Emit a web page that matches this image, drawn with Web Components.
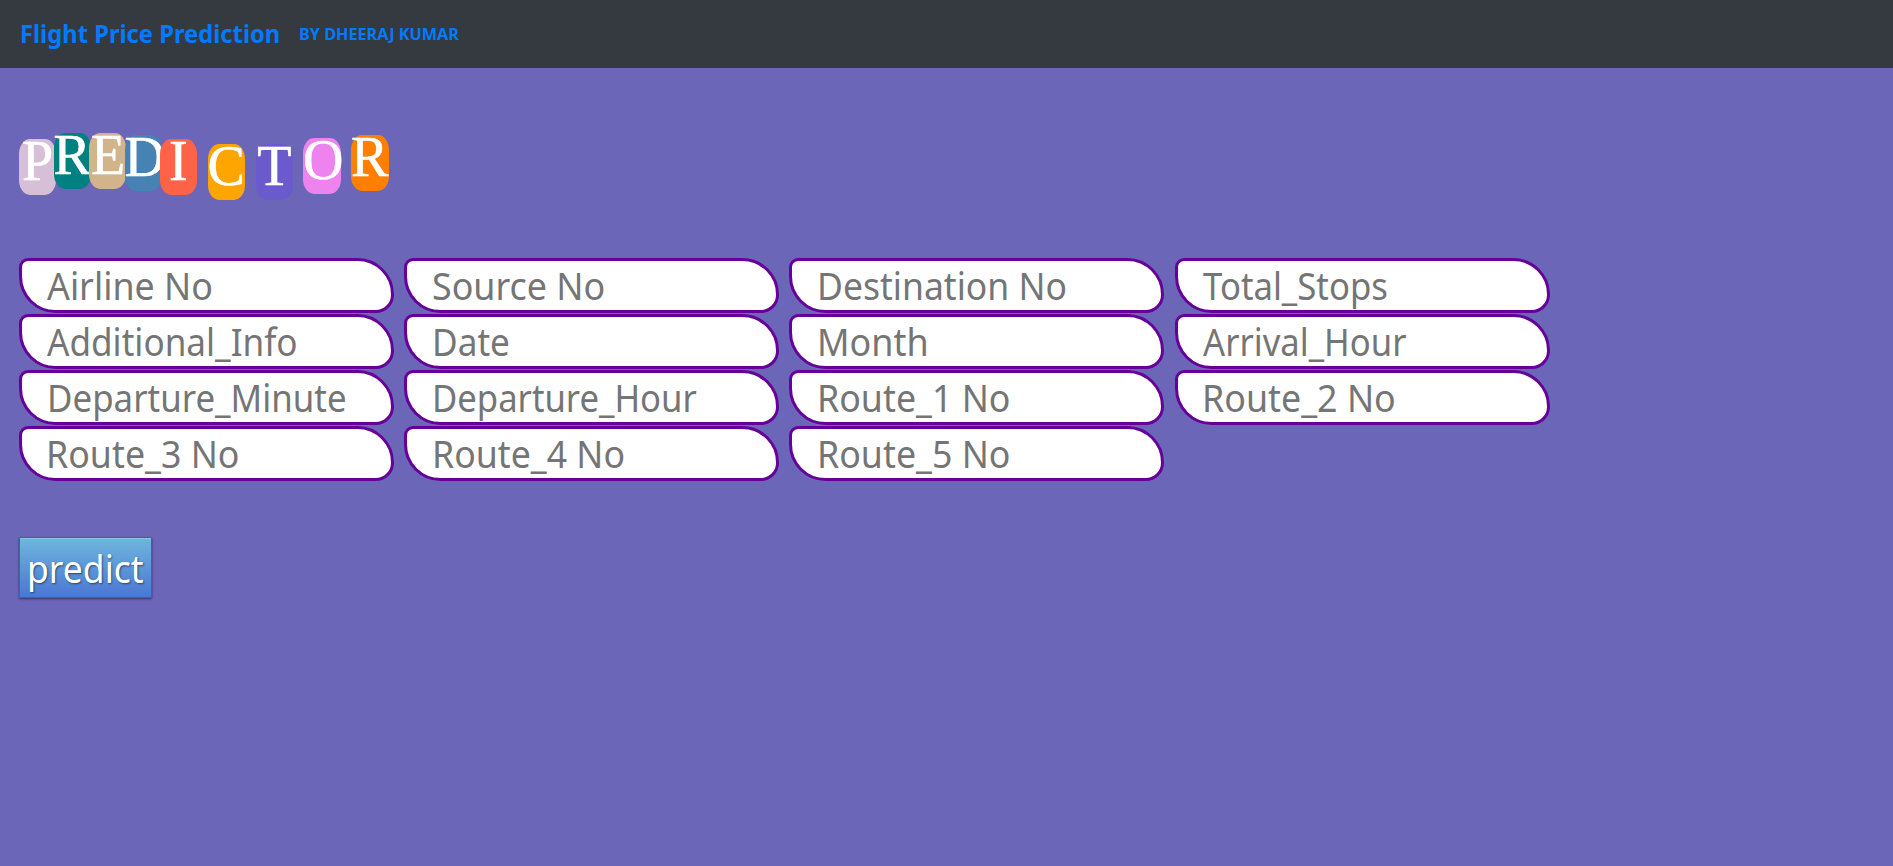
<!DOCTYPE html>
<html lang="en">
<head>
<meta charset="utf-8">
<title>Flight Price Prediction</title>
<style>
  html, body { margin: 0; height: 100%; background: #6c66b8; overflow: hidden; }
  body { font-family: "Noto Sans", "Open Sans", sans-serif; }
</style>
</head>
<body>
<flight-app></flight-app>
<script>
const define = (name, html, setup) => customElements.define(name, class extends HTMLElement {
  connectedCallback() {
    if (this.shadowRoot) return;
    this.attachShadow({ mode: "open" }).innerHTML = html;
    if (setup) setup(this, this.shadowRoot);
  }
});

// One line of text whose glyphs run from "from" to "to", measured from the host's left edge.
const pen = document.createElement("canvas").getContext("2d");
define("fit-text", `
  <style>
    :host { display: flex; white-space: nowrap; width: 0; }
    span { display: block; flex: none; transform-origin: 0 50%; }
  </style><span><slot></slot></span>`, (host, root) => {
  const span = root.querySelector("span"), cs = getComputedStyle(host);
  pen.font = `${cs.fontWeight} ${cs.fontSize} ${cs.fontFamily}`;
  const m = pen.measureText(host.textContent);
  const from = +host.getAttribute("from"), to = +host.getAttribute("to");
  const k = (to - from) / (m.actualBoundingBoxRight + m.actualBoundingBoxLeft);
  span.style.marginLeft = from + m.actualBoundingBoxLeft * k + "px";
  span.style.transform = `scaleX(${k})`;
});

define("nav-bar", `
  <style>
    :host { display: grid; grid-template-columns: 298px 1fr; height: 68px; background: #343a40; color: #007bff; font-weight: 700; }
    .brand { font-size: 25px; line-height: 67px; }
    .author { font-size: 15.5px; line-height: 68px; }
  </style>
  <fit-text class="brand" from="21.5" to="278.7">Flight Price Prediction</fit-text>
  <fit-text class="author" from="2.5" to="162.3">BY DHEERAJ KUMAR</fit-text>`);

define("letter-tile", `
  <style>
    :host { display: block; box-sizing: border-box; flex: none; width: 37px; height: 56px; border-radius: 11px / 15px;
      color: #fff; font: 56px/44.5px "Liberation Serif", serif; white-space: nowrap; -webkit-text-stroke: .6px #fff; }
    span { display: block; width: 0; }
  </style><span><slot></slot></span>`, (host, root) => {
  host.style.background = host.getAttribute("fill");
  host.style.marginLeft = host.getAttribute("gap") + "px";
  host.style.marginTop = host.getAttribute("drop") + "px";
  root.querySelector("span").style.marginLeft = host.getAttribute("inset") + "px";
});

define("tile-word", `
  <style>
    :host { display: flex; align-items: flex-start; height: 126px; }
    letter-tile { position: relative; }
  </style>
  <letter-tile fill="#d8bfd8" gap="0" drop="7" inset="3">P</letter-tile>
  <letter-tile fill="#008080" gap="-2" drop="0.5" inset="-0.5">R</letter-tile>
  <letter-tile fill="#d2b48c" gap="-2" drop="1" inset="2">E</letter-tile>
  <letter-tile fill="#4682b4" gap="-1" drop="3" inset="-0.5">D</letter-tile>
  <letter-tile fill="#ff6347" gap="-2" drop="6.7" inset="9">I</letter-tile>
  <letter-tile fill="#ffa500" gap="11" drop="12" inset="-0.5">C</letter-tile>
  <letter-tile fill="#6a5acd" gap="10.5" drop="12" inset="1.7" style="width:37.5px">T</letter-tile>
  <letter-tile fill="#ee82ee" gap="10" drop="6.2" inset="0" style="width:38px">O</letter-tile>
  <letter-tile fill="#ff8000" gap="10" drop="3" inset="0" style="width:38px">R</letter-tile>`);

define("form-field", `
  <style>
    :host { display: block; box-sizing: border-box; width: 375px; height: 55px; border: 3px solid #609;
      border-radius: 10px 40px 20px 40px; background: #fff; color: #757575; font-size: 37.5px; line-height: 50px; }
    fit-text { margin-left: -3px; }
  </style>`, (host, root) => {
  const t = document.createElement("fit-text");
  t.setAttribute("from", host.getAttribute("from"));
  t.setAttribute("to", host.getAttribute("to"));
  t.textContent = host.getAttribute("label");
  root.append(t);
});

define("field-grid", `
  <style>:host { display: grid; grid-template-columns: 385px 385px 386px 375px; row-gap: 1px; }</style>
  <form-field label="Airline No" from="28" to="192.3"></form-field>
  <form-field label="Source No" from="29.3" to="200"></form-field>
  <form-field label="Destination No" from="30.7" to="276.3"></form-field>
  <form-field label="Total_Stops" from="28" to="212"></form-field>
  <form-field label="Additional_Info" from="28" to="277"></form-field>
  <form-field label="Date" from="30.7" to="104.7"></form-field>
  <form-field label="Month" from="30.7" to="137.3"></form-field>
  <form-field label="Arrival_Hour" from="28" to="231"></form-field>
  <form-field label="Departure_Minute" from="30.3" to="326"></form-field>
  <form-field label="Departure_Hour" from="30.7" to="292.3"></form-field>
  <form-field label="Route_1 No" from="30.7" to="219.7"></form-field>
  <form-field label="Route_2 No" from="29.7" to="219"></form-field>
  <form-field label="Route_3 No" from="30.3" to="219.3"></form-field>
  <form-field label="Route_4 No" from="30.7" to="219.3"></form-field>
  <form-field label="Route_5 No" from="30.7" to="219.7"></form-field>`);

define("predict-button", `
  <style>
    :host { display: block; box-sizing: border-box; width: 133px; height: 61px; margin-top: 56px;
      border: 1px solid #3762bc; background: linear-gradient(#6eb6de, #4a77d4); color: #fff;
      font-size: 37.5px; line-height: 62px; text-shadow: 1px 1px 2px rgba(0,0,0,.5);
      box-shadow: inset 0 1px 0 rgba(255,255,255,.2), 0 1px 2px rgba(0,0,0,.5); }
  </style><fit-text from="10" to="123.3">predict</fit-text>`);

define("flight-app", `
  <style>
    :host { display: block; }
    main { padding: 64px 0 0 19px; }
  </style>
  <nav-bar></nav-bar>
  <main>
    <tile-word></tile-word>
    <field-grid></field-grid>
    <predict-button></predict-button>
  </main>`);
</script>
</body>
</html>
